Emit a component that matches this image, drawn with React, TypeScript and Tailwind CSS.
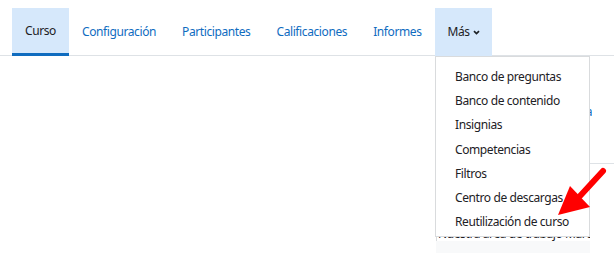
import React from "react";

const tabs = [
  { label: "Curso", active: true },
  { label: "Configuración" },
  { label: "Participantes" },
  { label: "Calificaciones" },
  { label: "Informes" },
];

const items = [
  "Banco de preguntas",
  "Banco de contenido",
  "Insignias",
  "Competencias",
  "Filtros",
  "Centro de descargas",
  "Reutilización de curso",
];

export default function App() {
  return (
    <div
      className="relative w-[614px] h-[253px] overflow-hidden bg-white text-[12px] tracking-[-0.4px]"
      style={{ fontFamily: '"Segoe UI", "Noto Sans", sans-serif' }}
    >
      <nav className="flex pt-[8px] pl-[12px] border-b border-[#dee2e6]">
        {tabs.map((t) =>
          t.active ? (
            <div
              key={t.label}
              className="h-[48px] -mb-px px-[13px] flex items-center bg-[#d6e8fb] border-b-[3px] border-[#0f6cbf] text-[#1d2125]"
            >
              {t.label}
            </div>
          ) : (
            <div
              key={t.label}
              className="h-[48px] -mb-px px-[13px] flex items-center text-[#0f6cbf]"
            >
              {t.label}
            </div>
          )
        )}
        <div className="h-[48px] -mb-px pl-[13px] pr-[12px] flex items-center gap-[3px] bg-[#d6e8fb] text-[#1d2125]">
          Más
          <svg width="7" height="5" viewBox="0 0 7 5" className="mt-[1px]">
            <path d="M1 1.2 L3.5 3.6 L6 1.2" fill="none" stroke="#1d2125" strokeWidth="1.7" />
          </svg>
        </div>
      </nav>

      <div className="flex">
        <div className="flex-1" />
        <div className="w-[178px] flex flex-col">
          <div className="mt-[47px] ml-[152px] w-[4px] h-[18px] overflow-hidden flex justify-end text-[#0f6cbf] leading-[18px]">
            <span className="whitespace-nowrap">área</span>
          </div>
          <div className="mt-[42px] ml-[154px] border-t border-[#dee2e6]" />
          <div className="mt-[72px] w-[154px] h-[5px] overflow-hidden border-l border-[#d9dbdd]">
            <div className="-mt-[11px] pl-[1px] whitespace-nowrap text-[#1d2125] leading-[18px]">
              Nuestra área de trabajo Marcas p
            </div>
          </div>
          <div className="w-[154px] h-[14px] bg-[#f8f9fa]" />
        </div>
      </div>

      <div className="absolute left-[435px] top-[56px] w-[155px] h-[181px] bg-white border border-[#d9dbdd] pt-[8px] text-[#1d2125]">
        {items.map((it) => (
          <div key={it} className="h-[24.2px] pl-[19px] flex items-center whitespace-nowrap">
            {it}
          </div>
        ))}
      </div>

      <svg
        className="absolute left-[550px] top-[165px]"
        width="60"
        height="55"
        viewBox="0 0 60 55"
      >
        <line x1="53" y1="6" x2="30" y2="31" stroke="#ff0000" strokeWidth="6" strokeLinecap="round" />
        <polygon points="8,50 20,21 40,42" fill="#ff0000" />
      </svg>
    </div>
  );
}
